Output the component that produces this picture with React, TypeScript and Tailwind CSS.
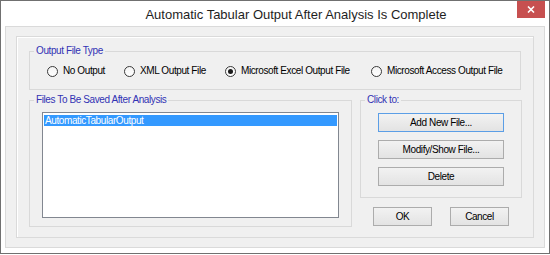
import React from "react";

function Radio({ label, checked, width }: { label: string; checked?: boolean; width?: string }) {
  return (
    <div className={`flex items-center gap-[5px] whitespace-nowrap ${width ?? ""}`}>
      <span className="flex h-[11px] w-[11px] shrink-0 items-center justify-center rounded-full border border-[#3a3a3a] bg-gradient-to-b from-[#f4f4f4] to-white">
        {checked && <span className="h-[5px] w-[5px] rounded-full bg-[#1a1a1a]" />}
      </span>
      <span className="leading-[14px]">{label}</span>
    </div>
  );
}

function Btn({ label, focused, className }: { label: string; focused?: boolean; className?: string }) {
  return (
    <button
      className={`flex h-[19px] items-center justify-center whitespace-nowrap border bg-gradient-to-b from-[#f2f2f2] to-[#e3e3e3] leading-[13px] text-black ${
        focused ? "border-[#5b9ee6]" : "border-[#acacac]"
      } ${className ?? ""}`}
    >
      {label}
    </button>
  );
}

export default function App() {
  return (
    <div className="h-[255px] w-[550px] bg-white font-['Liberation_Sans',Arial,sans-serif] text-[10px] tracking-[-0.4px] text-black">
      <div className="relative flex h-[254px] flex-col border border-[#707070] bg-white">
        <div className="flex h-[25px] shrink-0 items-center justify-center pl-[42px] pt-[3px] text-[13px] tracking-normal text-[#1e1e1e]">
          Automatic Tabular Output After Analysis Is Complete
        </div>
        <div className="absolute right-[4px] top-0 flex h-[17px] w-[28px] items-center justify-center bg-[#c75050]">
          <svg width="8" height="7" viewBox="0 0 8 7">
            <path d="M1 0.5 L7 6.5 M7 0.5 L1 6.5" stroke="white" strokeWidth="1.6" />
          </svg>
        </div>
        <div className="flex flex-1 px-[4px] pb-[5px]">
          <div className="flex flex-1 border border-[#dadada] bg-[#f0f0f0] px-[10px] py-[9px]">
            <div className="flex flex-1 flex-col border border-[#dadada] pb-[9px] pl-[12px] pr-[11px] pt-[7px] shadow-[inset_1px_1px_0_#ffffff]">
              <fieldset className="mr-[1px] border border-[#d9d9d9] p-0">
                <legend className="ml-[4px] px-[2px] leading-[14px] text-[#3232b4]">Output File Type</legend>
                <div className="flex pb-[11px] pl-[17px] pt-[6px]">
                  <Radio label="No Output" width="w-[77px]" />
                  <Radio label="XML Output File" width="w-[101px]" />
                  <Radio label="Microsoft Excel Output File" checked width="w-[146px]" />
                  <Radio label="Microsoft Access Output File" />
                </div>
              </fieldset>
              <div className="mt-[3px] flex gap-[8px]">
                <fieldset className="w-[323px] border border-[#d9d9d9] p-0">
                  <legend className="ml-[4px] px-[2px] leading-[14px] text-[#3232b4]">Files To Be Saved After Analysis</legend>
                  <div className="px-[12px] pb-[8px] pt-[5px]">
                    <div className="h-[106px] border border-[#828790] bg-white px-[1px] pt-[2px]">
                      <div className="h-[11px] bg-[#3399ff] pl-[1px] leading-[11px] text-white">AutomaticTabularOutput</div>
                    </div>
                  </div>
                </fieldset>
                <div className="flex w-[162px] flex-col">
                  <fieldset className="border border-[#d9d9d9] p-0">
                    <legend className="ml-[4px] px-[2px] leading-[14px] text-[#3232b4]">Click to:</legend>
                    <div className="flex flex-col gap-[8px] px-[17px] pb-[11px] pt-[6px]">
                      <Btn label="Add New File..." focused />
                      <Btn label="Modify/Show File..." />
                      <Btn label="Delete" />
                    </div>
                  </fieldset>
                  <div className="mt-[9px] flex justify-center gap-[18px]">
                    <Btn label="OK" className="w-[59px]" />
                    <Btn label="Cancel" className="w-[59px]" />
                  </div>
                </div>
              </div>
            </div>
          </div>
        </div>
      </div>
    </div>
  );
}
